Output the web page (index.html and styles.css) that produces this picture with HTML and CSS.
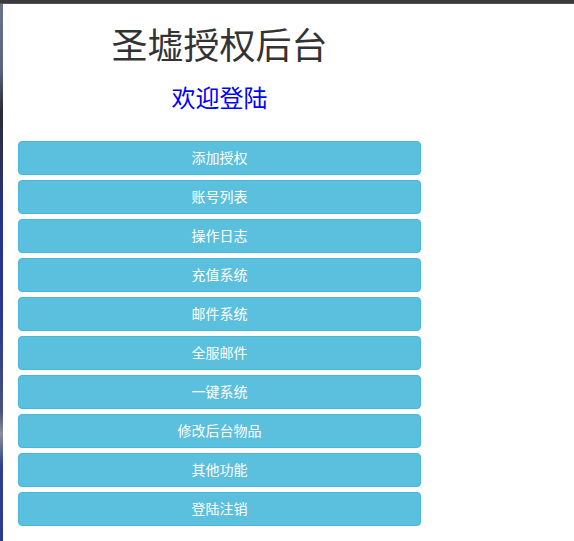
FILE: index.html
```html
<!DOCTYPE html>
<html lang="zh-CN">
<head>
<meta charset="utf-8">
<title>圣墟授权后台</title>
<link rel="stylesheet" href="styles.css">
</head>
<body>
<div class="topbar"></div>
<div class="frame">
  <div class="strip"></div>
  <main class="panel">
    <h1 class="title">圣墟授权后台</h1>
    <h2 class="welcome">欢迎登陆</h2>
    <nav class="menu">
      <a class="btn" href="#">添加授权</a>
      <a class="btn" href="#">账号列表</a>
      <a class="btn" href="#">操作日志</a>
      <a class="btn" href="#">充值系统</a>
      <a class="btn" href="#">邮件系统</a>
      <a class="btn" href="#">全服邮件</a>
      <a class="btn" href="#">一键系统</a>
      <a class="btn" href="#">修改后台物品</a>
      <a class="btn" href="#">其他功能</a>
      <a class="btn" href="#">登陆注销</a>
    </nav>
  </main>
</div>
</body>
</html>
```

FILE: styles.css
```css
html, body {
  margin: 0;
  padding: 0;
  height: 100%;
  background: #ffffff;
  font-family: "Noto Sans CJK SC", "Noto Sans", "Liberation Sans", sans-serif;
  overflow: hidden;
}

.topbar {
  height: 4px;
  background: #3b3b3b;
  border-bottom: 1px solid #555;
  box-sizing: border-box;
}

.frame {
  display: flex;
  height: calc(100% - 4px);
}

.strip {
  width: 3px;
  flex: 0 0 3px;
  background: linear-gradient(180deg,
    #6a7486 0%, #5a6680 12%, #2a2b36 20%, #2d3050 28%,
    #24338a 40%, #2a3a90 60%, #4a5478 76%, #8a8e98 80%,
    #2f3f8f 86%, #2b3b8a 100%);
}

.panel {
  padding-left: 15px;
  width: 403px;
}

.title {
  margin: 19px 0 0;
  height: 40px;
  line-height: 40px;
  font-size: 36px;
  font-weight: 400;
  color: #333333;
  text-align: center;
}

.welcome {
  margin: 21px 0 0;
  height: 26px;
  line-height: 26px;
  font-size: 24px;
  font-weight: 400;
  color: #0000ff;
  text-align: center;
}

.menu {
  margin-top: 31px;
  display: flex;
  flex-direction: column;
  gap: 5px;
}

.btn {
  display: block;
  box-sizing: border-box;
  height: 34px;
  padding: 5px 12px 7px;
  line-height: 20px;
  font-size: 14px;
  color: #ffffff;
  text-align: center;
  text-decoration: none;
  background: #5bc0de;
  border: 1px solid #46b8da;
  border-radius: 4px;
}
```
